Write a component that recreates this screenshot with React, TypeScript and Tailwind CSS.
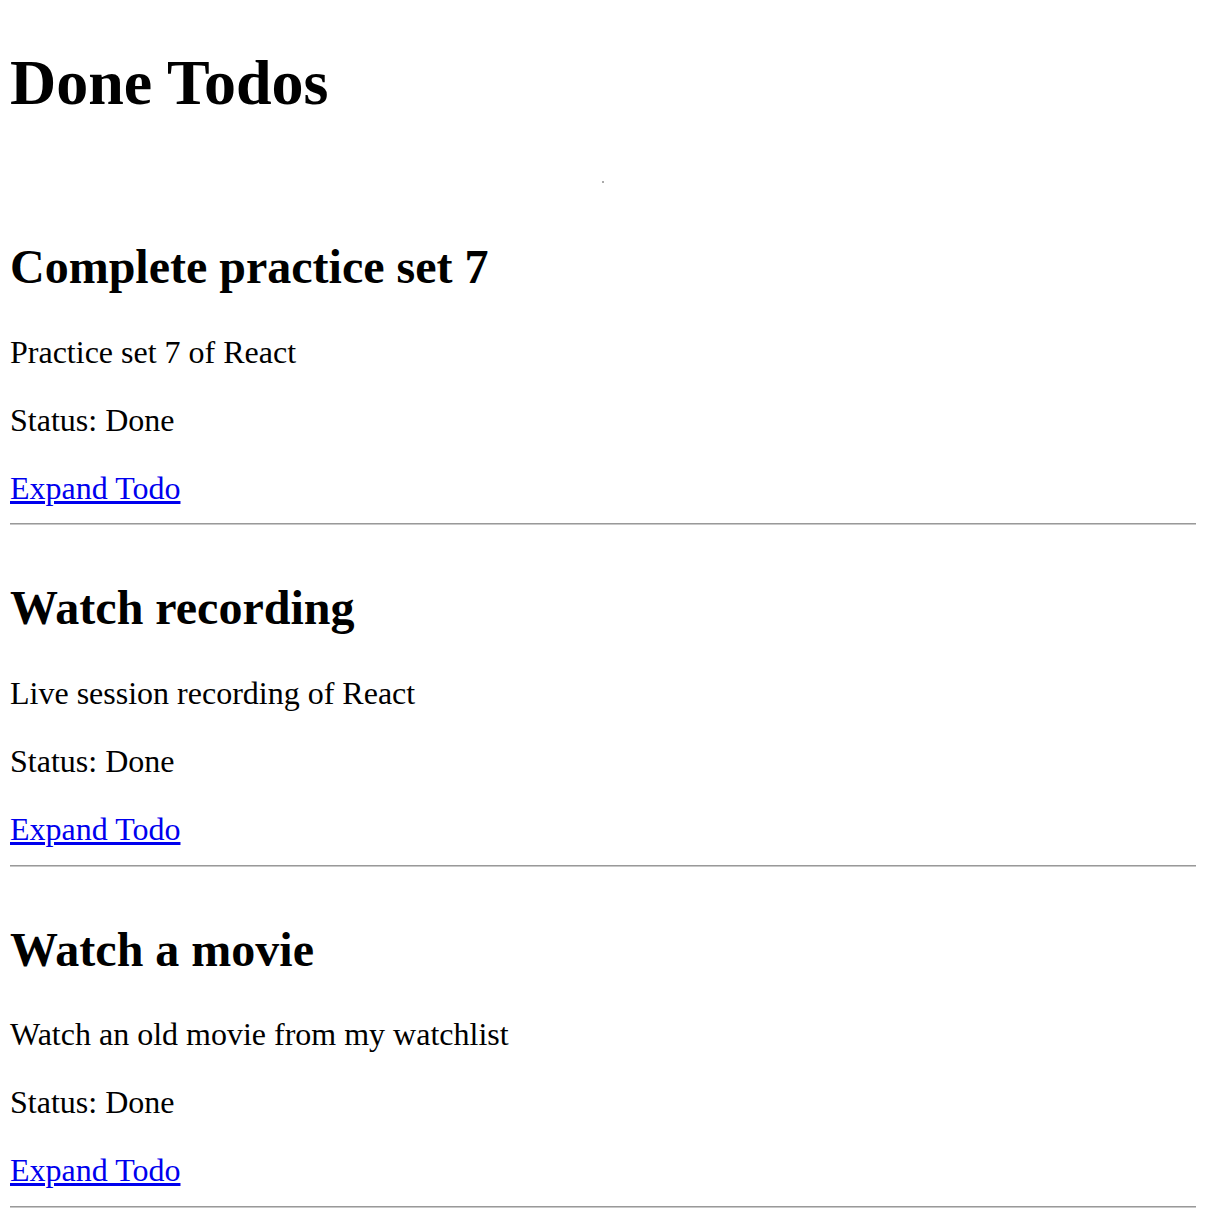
const todos = [
  {
    id: 1,
    title: "Complete practice set 7",
    description: "Practice set 7 of React",
    status: "Done",
  },
  {
    id: 2,
    title: "Watch recording",
    description: "Live session recording of React",
    status: "Done",
  },
  {
    id: 3,
    title: "Watch a movie",
    description: "Watch an old movie from my watchlist",
    status: "Done",
  },
];

function TodoItem({ todo, first }: { todo: (typeof todos)[number]; first: boolean }) {
  return (
    <div className={`flex flex-col ${first ? "mt-[121px]" : "mt-[56px]"}`}>
      <h2 className="text-[48px] leading-[54.5px] font-bold">{todo.title}</h2>
      <p className="mt-[39px] leading-[36.4px]">{todo.description}</p>
      <p className="mt-[31.6px] leading-[36.4px]">Status: {todo.status}</p>
      <p className="mt-[31.6px] leading-[36.4px]">
        <a href="#" className="text-[#0000ee] underline">
          Expand Todo
        </a>
      </p>
      <div className="mt-[17.5px] h-[2px] border-t border-[#999999] border-b border-b-[#c8c8c8]" />
    </div>
  );
}

export default function App() {
  return (
    <div
      className="min-h-screen bg-white text-black pl-[10px] pr-[14px] pt-[47px] text-[32px]"
      style={{ fontFamily: '"Liberation Serif", "Times New Roman", serif' }}
    >
      <h1 className="text-[64px] leading-[72px] font-bold">Done Todos</h1>
      <div className="relative">
        {/* empty element left on the page */}
        <span className="absolute left-[592px] top-[62px] w-[2px] h-[2px] bg-[#aaaaaa]" />
      </div>
      {todos.map((todo, i) => (
        <TodoItem key={todo.id} todo={todo} first={i === 0} />
      ))}
    </div>
  );
}
